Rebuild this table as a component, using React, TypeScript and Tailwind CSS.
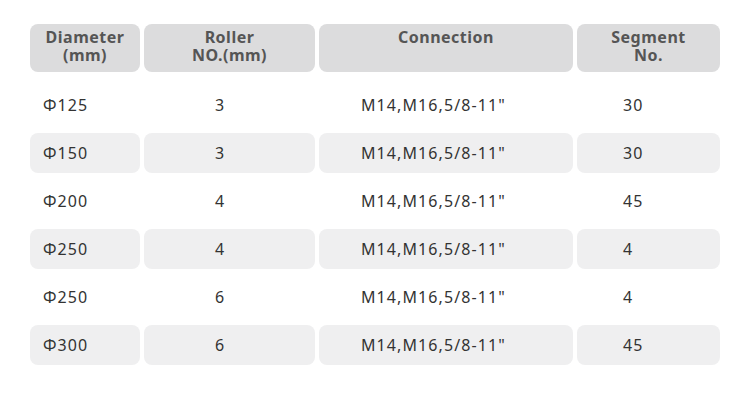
import React from "react";

const rows = [
  { d: "Φ125", r: "3", c: "M14,M16,5/8-11\"", s: "30" },
  { d: "Φ150", r: "3", c: "M14,M16,5/8-11\"", s: "30" },
  { d: "Φ200", r: "4", c: "M14,M16,5/8-11\"", s: "45" },
  { d: "Φ250", r: "4", c: "M14,M16,5/8-11\"", s: "4" },
  { d: "Φ250", r: "6", c: "M14,M16,5/8-11\"", s: "4" },
  { d: "Φ300", r: "6", c: "M14,M16,5/8-11\"", s: "45" },
];

const grid = "grid grid-cols-[110px_171px_254px_143px] gap-x-[4px]";

const App: React.FC = () => {
  return (
    <div
      className="w-[750px] h-[420px] bg-white pt-[24px] pl-[30px]"
      style={{ fontFamily: '"Noto Sans", "Open Sans", sans-serif' }}
    >
      {/* Header */}
      <div className={`${grid} h-[48px]`}>
        {[
          ["Diameter", "(mm)"],
          ["Roller", "NO.(mm)"],
          ["Connection"],
          ["Segment", "No."],
        ].map((lines, i) => (
          <div
            key={i}
            className="bg-[#dcdcdd] rounded-lg text-center font-bold text-[16px] leading-[18px] tracking-[0.5px] text-[#555555] pt-[4px]"
          >
            {lines.map((l) => (
              <div key={l}>{l}</div>
            ))}
          </div>
        ))}
      </div>

      {/* Body */}
      <div className="mt-[13px] flex flex-col gap-y-[8px]">
        {rows.map((row, i) => {
          const bg = i % 2 === 1 ? "bg-[#efeff0]" : "";
          const cell = `${bg} rounded-lg h-[40px] flex items-center text-[16px] tracking-[1.1px] text-[#333333]`;
          return (
            <div key={i} className={grid}>
              <div className={`${cell} pl-[13px]`}>{row.d}</div>
              <div className={`${cell} pl-[71px]`}>{row.r}</div>
              <div className={`${cell} pl-[42px]`}>{row.c}</div>
              <div className={`${cell} pl-[46px]`}>{row.s}</div>
            </div>
          );
        })}
      </div>
    </div>
  );
};

export default App;
